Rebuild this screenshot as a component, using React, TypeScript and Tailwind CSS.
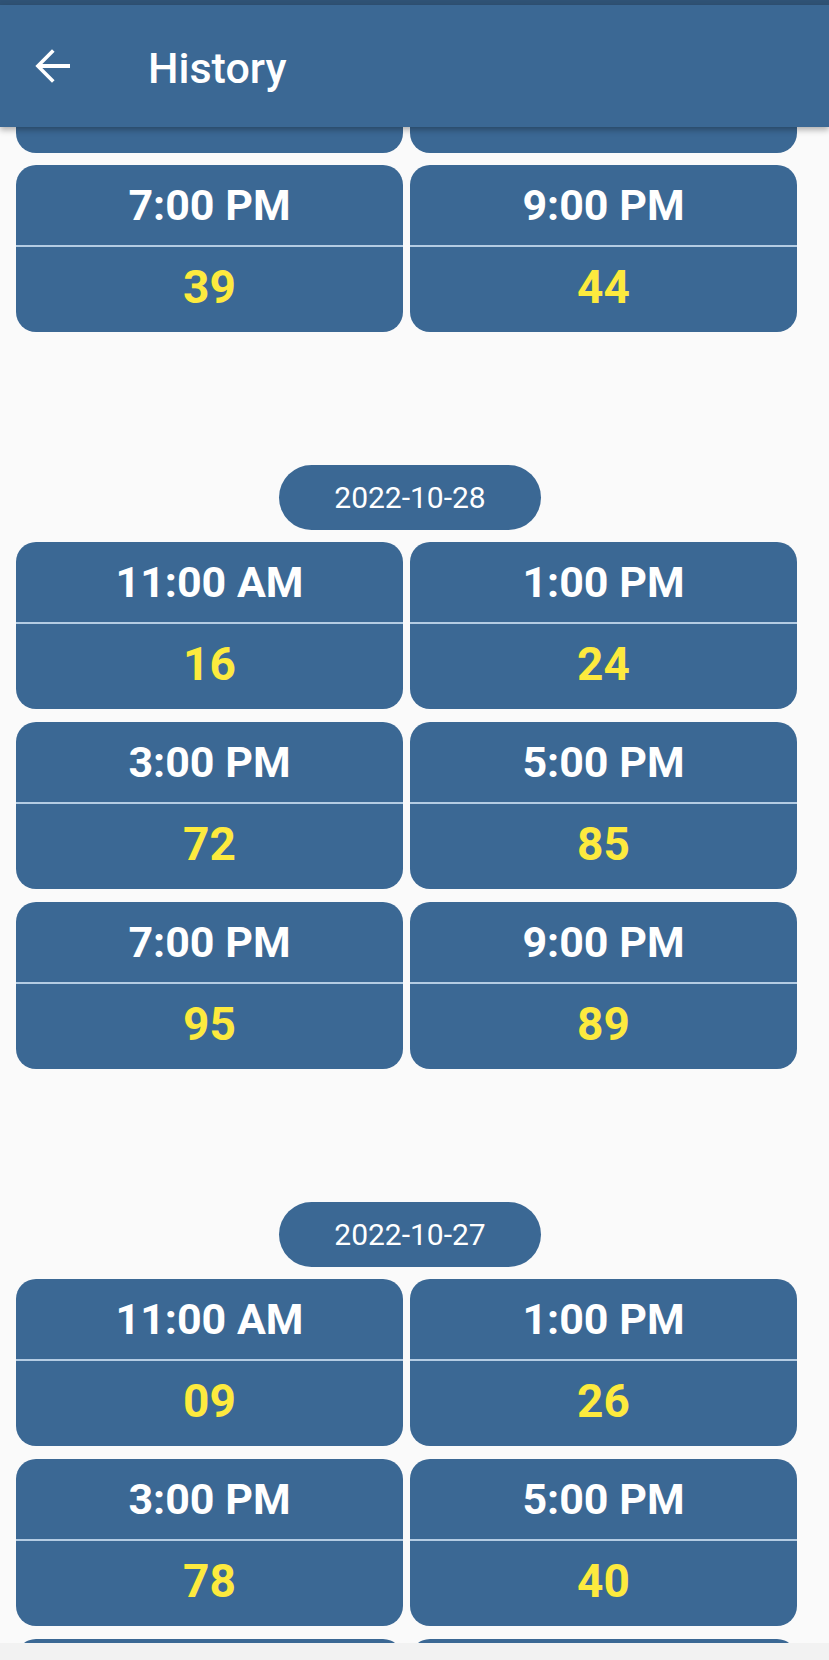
import React from "react";

type Slot = { time: string; value: string };
type Day = { date: string; slots: Slot[] };

const days: Day[] = [
    {
        date: "2022-10-28",
        slots: [
            { time: "11:00 AM", value: "16" },
            { time: "1:00 PM", value: "24" },
            { time: "3:00 PM", value: "72" },
            { time: "5:00 PM", value: "85" },
            { time: "7:00 PM", value: "95" },
            { time: "9:00 PM", value: "89" },
        ],
    },
    {
        date: "2022-10-27",
        slots: [
            { time: "11:00 AM", value: "09" },
            { time: "1:00 PM", value: "26" },
            { time: "3:00 PM", value: "78" },
            { time: "5:00 PM", value: "40" },
        ],
    },
];

const ResultCard = ({ slot }: { slot: Slot }) => {
    return (
        <div className="flex h-[167px] flex-col overflow-hidden rounded-[20px] bg-[#3b6894]">
            <div className="flex h-[80px] items-center justify-center text-[43px] font-bold text-white">
                {slot.time}
            </div>
            <div className="h-[1.5px] bg-[#b4cce3]" />
            <div className="flex flex-1 items-center justify-center pb-[4px] text-[46px] font-bold text-[#fdea3e]">
                {slot.value}
            </div>
        </div>
    );
};

const App = () => {
    return (
        <div
            className="flex h-[1660px] w-[829px] flex-col overflow-hidden bg-[#fafafa]"
            style={{ fontFamily: "Roboto, 'Noto Sans', sans-serif" }}
        >
            <div className="h-[5px] bg-[#2f5275]" />
            <header className="relative z-10 flex h-[122px] items-center bg-[#3b6894] shadow-[0_3px_6px_rgba(0,0,0,0.3)]">
                <button className="ml-[25px] flex h-[54px] w-[54px] items-center justify-center text-white">
                    <svg viewBox="0 0 24 24" width="54" height="54" fill="currentColor">
                        <path d="M20 11.15H7.7l5.45-5.45L12 4.6 4.6 12l7.4 7.4 1.15-1.1-5.45-5.45H20z" />
                    </svg>
                </button>
                <h1 className="ml-[69px] mt-[4px] text-[43px] font-medium leading-none text-white">History</h1>
            </header>

            <main className="flex-1 overflow-hidden pl-[16px] pr-[32px]">
                {/* tail of the previous day, scrolled under the header */}
                <div className="grid grid-cols-2 gap-[7px]">
                    <div className="h-[26px] rounded-b-[20px] bg-[#3b6894]" />
                    <div className="h-[26px] rounded-b-[20px] bg-[#3b6894]" />
                </div>
                <div className="mt-[12px] grid grid-cols-2 gap-[7px]">
                    <ResultCard slot={{ time: "7:00 PM", value: "39" }} />
                    <ResultCard slot={{ time: "9:00 PM", value: "44" }} />
                </div>

                {days.map((day) => (
                    <section key={day.date} className="mt-[133px]">
                        <div className="flex justify-center pl-[7px]">
                            <div className="flex h-[65px] w-[262px] items-center justify-center rounded-full bg-[#3b6894] text-[30px] text-white">
                                {day.date}
                            </div>
                        </div>
                        <div className="mt-[12px] grid grid-cols-2 gap-x-[7px] gap-y-[13px]">
                            {day.slots.map((slot) => (
                                <ResultCard key={slot.time} slot={slot} />
                            ))}
                        </div>
                    </section>
                ))}

                {/* top edge of the next row, just entering the screen */}
                <div className="mt-[13px] grid grid-cols-2 gap-[7px]">
                    <div className="h-[40px] rounded-t-[20px] bg-[#3b6894]" />
                    <div className="h-[40px] rounded-t-[20px] bg-[#3b6894]" />
                </div>
            </main>

            <div className="h-[17px] bg-[#f2f2f2]" />
        </div>
    );
};

export default App;
